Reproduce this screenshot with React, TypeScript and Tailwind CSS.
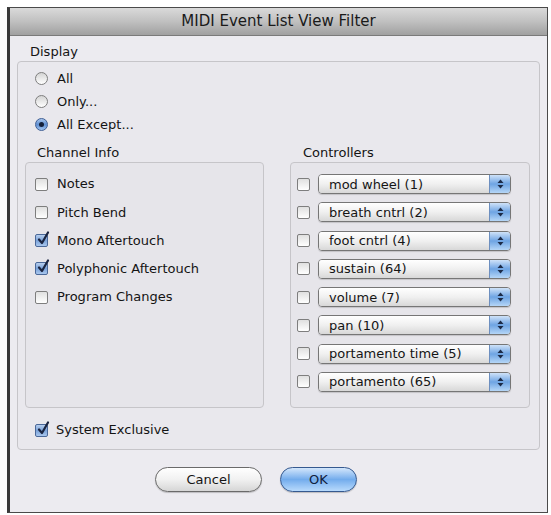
import { useState } from "react";

const controllers = [
  "mod wheel (1)",
  "breath cntrl (2)",
  "foot cntrl (4)",
  "sustain (64)",
  "volume (7)",
  "pan (10)",
  "portamento time (5)",
  "portamento (65)",
];

function Radio({ checked }: { checked: boolean }) {
  if (checked) {
    return (
      <span className="flex h-[13px] w-[13px] items-center justify-center rounded-full border border-[#3f5f95] bg-gradient-to-b from-[#a9c6ec] via-[#5f8fd2] to-[#9fc3ef]">
        <span className="h-[5px] w-[5px] rounded-full bg-[#14203a]" />
      </span>
    );
  }
  return (
    <span className="h-[13px] w-[13px] rounded-full border border-[#7e7e7e] bg-gradient-to-b from-[#d4d4d4] to-[#ffffff]" />
  );
}

function Checkbox({ checked }: { checked: boolean }) {
  if (checked) {
    return (
      <span className="relative h-[13px] w-[13px] shrink-0 rounded-[2px] border border-[#4a6899] bg-gradient-to-b from-[#b8cfee] via-[#7aa2d9] to-[#a9c7ee]">
        <svg className="absolute -top-[4px] left-[1px]" width="13" height="15" viewBox="0 0 13 15">
          <path d="M2 8.5 L5 12 L11 1.5" fill="none" stroke="#1a2440" strokeWidth="2.2" strokeLinecap="round" strokeLinejoin="round" />
        </svg>
      </span>
    );
  }
  return (
    <span className="h-[13px] w-[13px] shrink-0 rounded-[2px] border border-[#7e7e7e] bg-gradient-to-b from-[#e0e0e0] to-[#ffffff]" />
  );
}

function Popup({ label }: { label: string }) {
  return (
    <div className="flex h-[20px] w-[193px] overflow-hidden rounded-[4px] border border-[#767676] shadow-[0_1px_1px_rgba(0,0,0,0.15)]">
      <div className="flex flex-1 items-center bg-gradient-to-b from-[#ffffff] via-[#f0f0f0] to-[#d8d8d8] pl-[10px] text-[13px] leading-none text-[#151515]">
        {label}
      </div>
      <div className="flex w-[21px] flex-col items-center justify-center gap-[2px] border-l border-[#6d8fbf] bg-gradient-to-b from-[#cfe2f8] via-[#6ea4e3] to-[#b5d6f7]">
        <svg width="7" height="4" viewBox="0 0 7 4">
          <path d="M0.5 4 L3.5 0.5 L6.5 4 Z" fill="#1c2b48" />
        </svg>
        <svg width="7" height="4" viewBox="0 0 7 4">
          <path d="M0.5 0 L3.5 3.5 L6.5 0 Z" fill="#1c2b48" />
        </svg>
      </div>
    </div>
  );
}

export default function App() {
  const [mode] = useState(2);
  const channel = [
    { label: "Notes", checked: false },
    { label: "Pitch Bend", checked: false },
    { label: "Mono Aftertouch", checked: true },
    { label: "Polyphonic Aftertouch", checked: true },
    { label: "Program Changes", checked: false },
  ];

  return (
    <div className="h-[515px] w-[551px] bg-white pb-[2px] pl-[7px] pr-[3px] pt-[7px] font-['DejaVu_Sans',sans-serif] text-[#141414]">
      <div className="flex h-full flex-col border border-l-[3px] border-[#4a4a4a] border-l-[#3a3a3a] bg-[#ecebf0]">
        {/* Title bar */}
        <div className="flex h-[28px] shrink-0 items-center justify-center border-b border-[#7a7a7a] bg-gradient-to-b from-[#dadada] via-[#c0c0c0] to-[#a0a0a0] text-[15px] text-[#1a1a1a]">
          MIDI Event List View Filter
        </div>

        <div className="px-[7px] pt-[8px]">
          <div className="pl-[13px] text-[13px] leading-[16px]">Display</div>

          {/* Display group */}
          <div className="mt-[1px] flex h-[389px] flex-col rounded-[4px] border border-[#c6c5c9] bg-[#e9e8ed] pt-[5px]">
            {["All", "Only...", "All Except..."].map((r, i) => (
              <div key={r} className="flex h-[23px] items-center gap-[9px] pl-[17px] text-[13px]">
                <Radio checked={mode === i} />
                <span>{r}</span>
              </div>
            ))}

            <div className="mt-[9px] flex gap-[26px] pl-[7px]">
              {/* Channel Info */}
              <div className="flex flex-col">
                <div className="pl-[12px] text-[13px] leading-[16px]">Channel Info</div>
                <div className="mt-[1px] h-[246px] w-[239px] rounded-[4px] border border-[#c6c5c9] bg-[#e6e5ea] pl-[9px] pt-[7px]">
                  {channel.map((c) => (
                    <div key={c.label} className="flex h-[28.25px] items-center gap-[9px] text-[13px]">
                      <Checkbox checked={c.checked} />
                      <span>{c.label}</span>
                    </div>
                  ))}
                </div>
              </div>

              {/* Controllers */}
              <div className="flex flex-col">
                <div className="pl-[13px] text-[13px] leading-[16px]">Controllers</div>
                <div className="mt-[1px] h-[246px] w-[240px] rounded-[4px] border border-[#c6c5c9] bg-[#e6e5ea] pl-[6px] pt-[7px]">
                  {controllers.map((c) => (
                    <div key={c} className="flex h-[28.25px] items-center gap-[8px]">
                      <Checkbox checked={false} />
                      <Popup label={c} />
                    </div>
                  ))}
                </div>
              </div>
            </div>

            <div className="mt-[12px] flex h-[20px] items-center gap-[8px] pl-[17px] text-[13px]">
              <Checkbox checked={true} />
              <span>System Exclusive</span>
            </div>
          </div>

          {/* Buttons */}
          <div className="mt-[17px] flex gap-[18px] pl-[138px]">
            <button className="h-[25px] w-[107px] rounded-full border border-[#6a6a6a] bg-gradient-to-b from-[#ffffff] via-[#f1f1f1] to-[#d6d6d6] text-[13px] text-[#151515] shadow-[0_1px_1px_rgba(0,0,0,0.2)]">
              Cancel
            </button>
            <button className="h-[25px] w-[77px] rounded-full border border-[#35598f] bg-gradient-to-b from-[#d3e6fb] via-[#73acec] to-[#b8dafc] text-[13px] text-[#10203c] shadow-[0_1px_1px_rgba(0,0,0,0.2)]">
              OK
            </button>
          </div>
        </div>
      </div>
    </div>
  );
}
